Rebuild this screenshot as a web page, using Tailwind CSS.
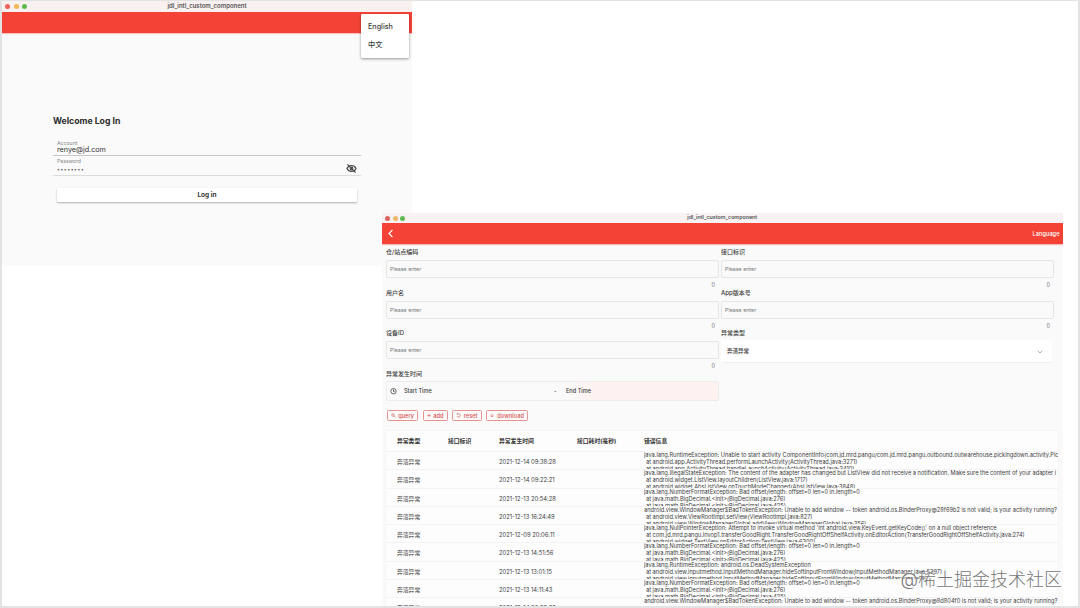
<!DOCTYPE html>
<html lang="en">

<head>
    <meta charset="UTF-8">
    <meta name="viewport" content="width=device-width, initial-scale=1.0">
    <title>jdl_intl_custom_component</title>
    <script src="https://cdn.jsdelivr.net/npm/@tailwindcss/browser@4"></script>
</head>

<body class="bg-white overflow-hidden">
    <main class="relative w-[1080px] h-[608px] overflow-hidden bg-white border-t border-l-2 border-r-2 border-b-2 border-[#e2e3e5] font-['Inter','Noto_Sans_CJK_SC',sans-serif] text-[#3c3c3c] text-[6px] leading-none">

        <!-- Login window -->
        <section class="absolute left-0 top-0 w-[410px] h-[265px] bg-[#fafafa] flex flex-col">
            <header class="relative h-[10.500px] shrink-0 bg-[#f9f0f0] flex items-center justify-center">
                <div class="absolute left-[3px] top-[2.500px] flex gap-[3.500px]">
                    <span class="size-[5px] rounded-full bg-[#e9635a]"></span>
                    <span class="size-[5px] rounded-full bg-[#f3b755]"></span>
                    <span class="size-[5px] rounded-full bg-[#5dbb4d]"></span>
                </div>
                <span class="text-[6px] font-semibold text-[#555]">jdl_intl_custom_component</span>
            </header>
            <div class="h-[21.500px] shrink-0 bg-[#f44336] shadow-[0_1px_1px_rgba(244,67,54,0.3)]"></div>

            <div class="pl-[51px] pr-[51px] pt-[83px] flex flex-col">
                <h1 class="h-[10px] text-[8.700px] leading-[10px] font-bold text-[#2b2b2b]">Welcome Log In</h1>
                <div class="mt-[13px] h-[17px] pt-[1px] pl-1 border-b border-[#c8c8c8] flex flex-col">
                    <span class="h-[6px] text-[5.200px] leading-[6px] text-[#888]">Account</span>
                    <span class="h-[8px] text-[7.200px] leading-[8px] text-[#333]">renye@jd.com</span>
                </div>
                <div class="mt-[2px] h-[18px] pl-1 pr-1 border-b border-[#dcdcdc] flex justify-between">
                    <div class="flex flex-col">
                        <span class="h-[7px] text-[5.200px] leading-[7px] text-[#888]">Password</span>
                        <span class="mt-[2px] h-[5px] text-[5px] leading-[5px] tracking-[0.600px] text-[#555]">••••••••</span>
                    </div>
                    <svg class="mt-[5px] size-[11px]" viewBox="0 0 24 24" fill="none" stroke="#444" stroke-width="2.4">
                        <path d="M2 12c2-4 5.500-6.500 10-6.500S20 8 22 12c-2 4-5.500 6.500-10 6.500S4 16 2 12z" />
                        <circle cx="12" cy="12" r="3" />
                        <path d="M3 3l18 18" />
                    </svg>
                </div>
                <button class="mt-[12px] ml-1 mr-1 h-[14px] rounded-[1px] bg-white text-[6.500px] font-bold text-[#333] shadow-[0_1px_2px_rgba(0,0,0,0.3)]">Log in</button>
            </div>

            <!-- Language menu -->
            <ul class="absolute left-[359px] top-[13px] w-[48px] h-[44px] pt-[4px] pl-[7px] bg-white rounded-[1px] shadow-[0_1px_3px_rgba(0,0,0,0.4)] text-[7.200px] font-medium text-[#3c3c3c]">
                <li class="h-[18px] flex items-center">English</li>
                <li class="h-[18px] flex items-center">中文</li>
            </ul>
        </section>

        <!-- Exception list window -->
        <section class="absolute left-[380px] top-[212px] w-[680.500px] h-[394px] bg-[#fafafa] flex flex-col overflow-hidden">
            <header class="relative h-[10px] shrink-0 bg-[#f8f2f4] flex items-center justify-center">
                <div class="absolute left-[3px] top-[2.500px] flex gap-[2.500px]">
                    <span class="size-[5px] rounded-full bg-[#df655f]"></span>
                    <span class="size-[5px] rounded-full bg-[#edb765]"></span>
                    <span class="size-[5px] rounded-full bg-[#5dba51]"></span>
                </div>
                <span class="text-[5.300px] font-semibold text-[#555]">jdl_intl_custom_component</span>
            </header>
            <nav class="h-[21px] shrink-0 pl-[5px] pr-[3px] bg-[#f44336] shadow-[0_1px_1px_rgba(244,67,54,0.35)] flex items-center justify-between text-white">
                <svg class="w-[7px] h-[9px]" viewBox="0 0 7 9" fill="none" stroke="currentColor" stroke-width="1.2">
                    <path d="M5.500 .8L2 4.500L5.500 8.200" />
                </svg>
                <span class="pt-[1px] text-[5.700px] font-medium">Language</span>
            </nav>

            <!-- Search form -->
            <form class="pt-1 pl-1 pr-[9px] grid grid-cols-[333px_333px] gap-x-[2px] auto-rows-[40.700px] shrink-0 h-[163px]">
                <div>
                    <label class="block h-[8px] leading-[8px] text-[6px] font-medium">仓/站点编码</label>
                    <div class="mt-[4px] h-[18px] pt-[1px] px-[3px] border border-[#e6e6e6] rounded-[2px] flex items-center text-[5.300px] text-[#777]">Please enter</div>
                    <div class="mt-[4px] pr-[4px] text-right text-[5.500px] leading-[7px] text-[#777]">0</div>
                </div>
                <div>
                    <label class="block h-[8px] leading-[8px] text-[6px] font-medium">接口标识</label>
                    <div class="mt-[4px] h-[18px] pt-[1px] px-[3px] border border-[#e6e6e6] rounded-[2px] flex items-center text-[5.300px] text-[#777]">Please enter</div>
                    <div class="mt-[4px] pr-[4px] text-right text-[5.500px] leading-[7px] text-[#777]">0</div>
                </div>
                <div>
                    <label class="block h-[8px] leading-[8px] text-[6px] font-medium">用户名</label>
                    <div class="mt-[4px] h-[18px] pt-[1px] px-[3px] border border-[#e6e6e6] rounded-[2px] flex items-center text-[5.300px] text-[#777]">Please enter</div>
                    <div class="mt-[4px] pr-[4px] text-right text-[5.500px] leading-[7px] text-[#777]">0</div>
                </div>
                <div>
                    <label class="block h-[8px] leading-[8px] text-[6px] font-medium">App版本号</label>
                    <div class="mt-[4px] h-[18px] pt-[1px] px-[3px] border border-[#e6e6e6] rounded-[2px] flex items-center text-[5.300px] text-[#777]">Please enter</div>
                    <div class="mt-[4px] pr-[4px] text-right text-[5.500px] leading-[7px] text-[#777]">0</div>
                </div>
                <div>
                    <label class="block h-[8px] leading-[8px] text-[6px] font-medium">设备ID</label>
                    <div class="mt-[4px] h-[18px] pt-[1px] px-[3px] border border-[#e6e6e6] rounded-[2px] flex items-center text-[5.300px] text-[#777]">Please enter</div>
                    <div class="mt-[4px] pr-[4px] text-right text-[5.500px] leading-[7px] text-[#777]">0</div>
                </div>
                <div>
                    <label class="block h-[8px] leading-[8px] text-[6px] font-medium">异常类型</label>
                    <div class="mt-[3px] mr-[2px] h-[23px] pt-[1px] pl-[6px] pr-[9px] bg-white border-b border-[#efefef] rounded-[2px] flex items-center justify-between text-[5.500px] font-medium">
                        <span>奔溃异常</span>
                        <svg class="w-[6px] h-[4px]" viewBox="0 0 6 4" fill="none" stroke="#999" stroke-width=".8">
                            <path d="M.8 .8L3 3L5.200 .8" />
                        </svg>
                    </div>
                </div>
                <div>
                    <label class="block h-[8px] leading-[8px] text-[6px] font-medium">异常发生时间</label>
                    <div class="mt-[3px] h-[20px] border border-[#ececec] rounded-[2px] flex items-center text-[5.600px] font-medium">
                        <svg class="ml-[3px] size-[7px]" viewBox="0 0 7 7" fill="none" stroke="#444" stroke-width=".8">
                            <circle cx="3.500" cy="3.200" r="2.700" />
                            <path d="M3.500 1.500v1.900h1.300" />
                        </svg>
                        <span class="ml-[7px] w-[150px] pt-[1px]">Start Time</span>
                        <span class="w-[9px] pt-[1px]">-</span>
                        <span class="flex-1 h-full pt-[1px] pl-[3px] flex items-center bg-linear-to-r from-[#fafafa] to-[#fdf2f0] to-20%">End Time</span>
                    </div>
                </div>
            </form>

            <div class="mt-[3px] pl-[5px] flex gap-[4.500px] text-[6px] font-medium text-[#d9534f] h-[11px] shrink-0">
                <button class="w-[31px] h-[11px] px-[3px] border border-[#e79490] rounded-[1.500px] flex items-center justify-between">
                    <svg class="size-[5px]" viewBox="0 0 5 5" fill="none" stroke="currentColor" stroke-width=".6">
                        <circle cx="2" cy="2" r="1.300" />
                        <path d="M3 3l1.500 1.500" />
                    </svg>
                    <span class="text-[5.700px]">query</span>
                </button>
                <button class="w-[25px] h-[11px] px-[3px] border border-[#e79490] rounded-[1.500px] flex items-center justify-between">
                    <svg class="size-[5px]" viewBox="0 0 5 5" fill="none" stroke="currentColor" stroke-width=".6">
                        <path d="M2 .8v3.400M.3 2.500h3.400" />
                    </svg>
                    <span class="text-[5.700px]">add</span>
                </button>
                <button class="w-[29.500px] h-[11px] px-[3px] border border-[#e79490] rounded-[1.500px] flex items-center justify-between">
                    <svg class="size-[5px]" viewBox="0 0 5 5" fill="none" stroke="currentColor" stroke-width=".6">
                        <path d="M1 .8h1.800a1.700 1.700 0 1 1-1.800 2.200M1.800 0L1 .8l.8.8" />
                    </svg>
                    <span class="text-[5.700px]">reset</span>
                </button>
                <button class="w-[42px] h-[11px] px-[3px] border border-[#e79490] rounded-[1.500px] flex items-center justify-between">
                    <svg class="size-[5px]" viewBox="0 0 5 5" fill="none" stroke="currentColor" stroke-width=".6">
                        <path d="M2 .8v3M.6 2.500L2 3.900L3.400 2.500" />
                    </svg>
                    <span class="text-[5.700px]">download</span>
                </button>
            </div>

            <!-- Exception table -->
            <div class="mt-[10px] ml-[4px] mr-[4.500px] bg-[#fdfdfd] shadow-[0_0_2px_rgba(0,0,0,0.06)] text-[5.800px]">
                <div class="h-[21px] pl-[11px] grid grid-cols-[51px_51px_78px_67px_1fr] items-center border-b border-[#f3f3f3] font-bold text-[#333]">
                    <span>异常类型</span><span>接口标识</span><span>异常发生时间</span><span>接口耗时(毫秒)</span><span>错误信息</span>
                </div>
                <div id="rows"></div>
            </div>
        </section>

        <div class="absolute right-[16px] bottom-[16px] text-[18px] leading-[20px] whitespace-nowrap font-light text-[#777] [text-shadow:0_0_2px_white]">@稀土掘金技术社区</div>
    </main>

    <script>
        const bigDecimal = ['java.lang.NumberFormatException: Bad offset/length: offset=0 len=0 in.length=0', 'at java.math.BigDecimal.<init>(BigDecimal.java:276)', 'at java.math.BigDecimal.<init>(BigDecimal.java:425)'];
        const rows = [
            ['2021-12-14 09:38:28', ['java.lang.RuntimeException: Unable to start activity ComponentInfo{com.jd.mrd.pangu/com.jd.mrd.pangu.outbound.outwarehouse.pickingdown.activity.Pic', 'at android.app.ActivityThread.performLaunchActivity(ActivityThread.java:3271)', 'at android.app.ActivityThread.handleLaunchActivity(ActivityThread.java:3410)']],
            ['2021-12-14 09:22:21', ['java.lang.IllegalStateException: The content of the adapter has changed but ListView did not receive a notification. Make sure the content of your adapter i', 'at android.widget.ListView.layoutChildren(ListView.java:1717)', 'at android.widget.AbsListView.onTouchModeChanged(AbsListView.java:3848)']],
            ['2021-12-13 20:54:28', bigDecimal],
            ['2021-12-13 16:24:49', ['android.view.WindowManager$BadTokenException: Unable to add window -- token android.os.BinderProxy@28f69b2 is not valid; is your activity running?', 'at android.view.ViewRootImpl.setView(ViewRootImpl.java:827)', 'at android.view.WindowManagerGlobal.addView(WindowManagerGlobal.java:356)']],
            ['2021-12-09 20:06:11', ["java.lang.NullPointerException: Attempt to invoke virtual method 'int android.view.KeyEvent.getKeyCode()' on a null object reference", 'at com.jd.mrd.pangu.invop1.transferGoodRight.TransferGoodRightOffShelfActivity.onEditorAction(TransferGoodRightOffShelfActivity.java:274)', 'at android.widget.TextView.onEditorAction(TextView.java:6300)']],
            ['2021-12-13 14:51:56', bigDecimal],
            ['2021-12-13 13:01:15', ['java.lang.RuntimeException: android.os.DeadSystemException', 'at android.view.inputmethod.InputMethodManager.hideSoftInputFromWindow(InputMethodManager.java:5397)', 'at android.view.inputmethod.InputMethodManager.hideSoftInputFromWindow(InputMethodManager.java)']],
            ['2021-12-13 14:11:43', bigDecimal],
            ['2021-12-14 09:38:28', ['android.view.WindowManager$BadTokenException: Unable to add window -- token android.os.BinderProxy@8d804f0 is not valid; is your activity running?']],
        ];
        const esc = s => s.replace(/</g, '&lt;').replace(/>/g, '&gt;');
        document.getElementById('rows').innerHTML = rows.map(([time, lines]) => `
            <div class="h-[18.250px] pl-[11px] grid grid-cols-[51px_51px_78px_67px_minmax(0,1fr)] border-b border-[#f3f3f3] overflow-hidden">
                <span class="leading-[19px]">奔溃异常</span><span></span>
                <span class="leading-[19px] whitespace-nowrap">${time}</span><span></span>
                <div class="h-[18px] overflow-hidden whitespace-nowrap text-[5.670px] leading-[7px]">
                    ${lines.map((l, i) => `<p class="${i ? 'pl-[2px]' : ''}">${esc(l)}</p>`).join('')}
                </div>
            </div>`).join('');
    </script>
</body>

</html>
